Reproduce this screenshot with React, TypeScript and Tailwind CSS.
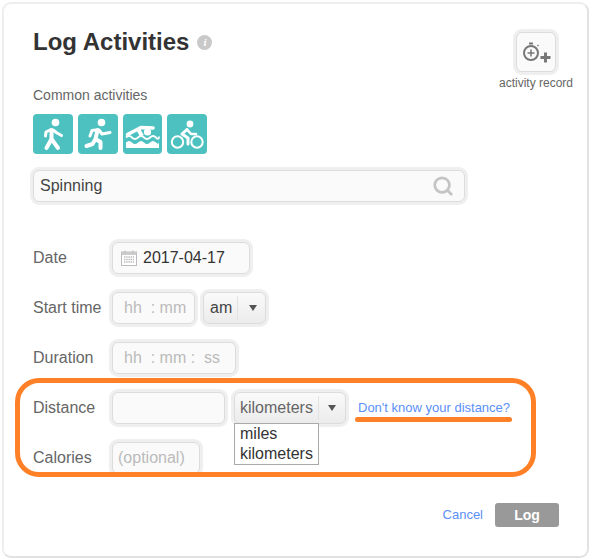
import { Search } from 'lucide-react';

// Log Activities form

const boxClass =
  'h-8 rounded-md border border-[#dcdcdc] bg-[#fafafa] ring-[3px] ring-[#efefef] flex items-center text-base';

function WalkIcon() {
  return (
    <svg viewBox="0 0 40 40" className="w-10 h-10" fill="none" stroke="#fff" strokeWidth="4" strokeLinecap="round" strokeLinejoin="round">
      <circle cx="22.5" cy="8.5" r="3.8" fill="#fff" stroke="none" />
      <path d="M18.5 16v9l-5 9M18.5 25l6.5 9" />
      <path d="M17 16l-4 2-.5 4M20 16l4 3 4.5 2.5" strokeWidth="3" />
    </svg>
  );
}

function RunIcon() {
  return (
    <svg viewBox="0 0 40 40" className="w-10 h-10" fill="none" stroke="#fff" strokeWidth="4" strokeLinecap="round" strokeLinejoin="round">
      <circle cx="23.5" cy="8.5" r="3.8" fill="#fff" stroke="none" />
      <path d="M19.5 16l-2 9-3 5-6 2M17.5 25l5 3v6" />
      <path d="M18 16l-4 .5-2 5.5M21 16l3 4 8-1.5" strokeWidth="3" />
    </svg>
  );
}

function SwimIcon() {
  return (
    <svg viewBox="0 0 39 40" className="w-[39px] h-10" fill="none">
      <circle cx="24.5" cy="18" r="3.6" fill="#fff" />
      <path d="M4.5 20.5L18 13.5l12 .5" stroke="#fff" strokeWidth="3.6" strokeLinecap="round" strokeLinejoin="round" />
      <path d="M15 15l4 7" stroke="#fff" strokeWidth="4" />
      <path d="M3 23.5q3-3 6 0t6 0 6 0 6 0 6 0 3-1" stroke="#fff" strokeWidth="1.8" />
      <path d="M3 28.5q3-3 6 0t6 0 6 0 6 0 6 0 3-1V34H3z" fill="#fff" />
    </svg>
  );
}

function BikeIcon() {
  return (
    <svg viewBox="0 0 40 40" className="w-10 h-10" fill="none" stroke="#fff" strokeLinecap="round" strokeLinejoin="round">
      <circle cx="23" cy="10" r="3.4" fill="#fff" stroke="none" />
      <circle cx="10.5" cy="28" r="5.7" strokeWidth="2" />
      <circle cx="30" cy="28" r="5.7" strokeWidth="2" />
      <path d="M20 15.5l-5 4.5 6 4v6" strokeWidth="3" />
      <path d="M20 15.5l4 4.5h5" strokeWidth="2.6" />
    </svg>
  );
}

function StopwatchPlus() {
  return (
    <svg viewBox="0 -2 30 24" className="w-[30px] h-6" fill="none" stroke="#777">
      <circle cx="10" cy="11" r="7" strokeWidth="2" />
      <path d="M10 7.5v7M6.5 11h7" strokeWidth="1.5" />
      <path d="M8 1.5h4" strokeWidth="2" />
      <path d="M16.5 3l1 1" strokeWidth="1.5" />
      <path d="M24.5 10.5v10M19.5 15.5h10" strokeWidth="3" />
    </svg>
  );
}

function CalendarIcon() {
  return (
    <svg viewBox="0 0 16 16" className="w-4 h-4 shrink-0" fill="none">
      <rect x="0.5" y="2" width="15" height="13.5" fill="#fff" stroke="#bbb" />
      <rect x="0.5" y="2" width="15" height="3" fill="#ccc" />
      <path d="M4 0.5v3M12 0.5v3" stroke="#bbb" />
      <path d="M3 7h10M3 9.5h10M3 12h10" stroke="#bbb" strokeWidth="1.4" strokeDasharray="1.4 0.8" />
    </svg>
  );
}

function Caret() {
  return <span className="w-0 h-0 border-x-[4px] border-x-transparent border-t-[6px] border-t-[#555]" />;
}

export default function App() {
  return (
    <div className="w-[594px] h-[560px] bg-white pl-[2px] pt-[2px] font-['Liberation_Sans',Arial,sans-serif]">
      <div className="relative w-[587px] h-[556px] rounded-[9px] border-2 border-[#eeeeee] border-b-[#e2e2e2] border-r-[#e2e2e2] pl-[29px] pr-[13px] pt-[24px]">
        {/* 头部 */}
        <div className="flex justify-between">
          <div className="w-[432px]">
            <h1 className="flex items-center text-2xl leading-[28px] font-bold text-[#333]">
              Log Activities
              <span className="ml-2 w-[15px] h-[15px] rounded-full bg-[#c9c9c9] text-white text-[11px] leading-[15px] italic font-['Liberation_Serif',serif] text-center">
                i
              </span>
            </h1>
            <div className="mt-[31px] text-sm leading-4 text-[#666]">Common activities</div>
            <div className="mt-[11px] flex gap-[5px]">
              <div className="w-10 h-10 rounded-[4px] bg-[#4dc1c0]"><WalkIcon /></div>
              <div className="w-10 h-10 rounded-[4px] bg-[#4dc1c0]"><RunIcon /></div>
              <div className="w-[39px] h-10 rounded-[4px] bg-[#4dc1c0]"><SwimIcon /></div>
              <div className="w-10 h-10 rounded-[4px] bg-[#4dc1c0]"><BikeIcon /></div>
            </div>
            <div className={`${boxClass} mt-4 pl-[6px] pr-[10px] justify-between text-[#444]`}>
              <span>Spinning</span>
              <Search className="w-[22px] h-[22px] text-[#c4c4c4]" strokeWidth={3} />
            </div>
          </div>
          <div className="flex flex-col items-center w-[76px] mt-[4px]">
            <div className="w-10 h-10 rounded-md border border-[#dcdcdc] bg-[#fafafa] ring-[3px] ring-[#efefef] flex items-center justify-center">
              <StopwatchPlus />
            </div>
            <span className="mt-[4px] text-xs leading-[14px] text-[#666] whitespace-nowrap">activity record</span>
          </div>
        </div>

        {/* 表单 */}
        <div className="mt-10 flex flex-col gap-[18px] text-[#666]">
          <div className="flex items-center">
            <span className="w-[79px] text-base">Date</span>
            <div className={`${boxClass} w-[138px] pl-2 gap-[6px] text-[#333]`}>
              <CalendarIcon />
              <span>2017-04-17</span>
            </div>
          </div>
          <div className="flex items-center">
            <span className="w-[79px] text-base">Start time</span>
            <div className={`${boxClass} w-[83px] pl-[11px] text-[#bbb] whitespace-nowrap`}>hh&nbsp;&nbsp;:&nbsp;mm</div>
            <div className={`${boxClass} ml-2 w-[63px] pl-[6px] bg-gradient-to-b from-[#fafafa] to-[#ebebeb] text-[#444]`}>
              <span>am</span>
              <span className="ml-[5px] h-6 border-l border-[#e2e2e2]" />
              <span className="ml-[11px] flex"><Caret /></span>
            </div>
          </div>
          <div className="flex items-center">
            <span className="w-[79px] text-base">Duration</span>
            <div className={`${boxClass} w-[124px] pl-[11px] text-[#bbb] whitespace-nowrap`}>hh&nbsp;&nbsp;:&nbsp;mm&nbsp;:&nbsp;&nbsp;ss</div>
          </div>
          <div className="flex items-center">
            <span className="w-[79px] text-base">Distance</span>
            <div className={`${boxClass} w-[113px]`} />
            <div className="relative ml-[9px]">
              <div className={`${boxClass} w-[112px] pl-1 bg-gradient-to-b from-[#fafafa] to-[#ebebeb] text-[#666]`}>
                <span className="pl-[1px]">kilometers</span>
                <span className="ml-[5px] h-6 border-l border-[#e2e2e2]" />
                <span className="ml-[9px] flex"><Caret /></span>
              </div>
              {/* 下拉菜单 */}
              <div className="absolute left-0 top-[31px] w-[85px] h-[42px] border border-[#aaa] bg-white pl-[5px] text-base leading-5 text-[#333]">
                <div>miles</div>
                <div>kilometers</div>
              </div>
            </div>
            <a className="ml-3 text-[13px] text-[#5b8ff9] whitespace-nowrap">Don't know your distance?</a>
          </div>
          <div className="flex items-center">
            <span className="w-[79px] text-base">Calories</span>
            <div className={`${boxClass} w-[88px] pl-[5px] text-[#bbb]`}>(optional)</div>
          </div>
        </div>

        <div className="mt-[29px] flex justify-end items-center pr-[15px]">
          <a className="text-[13px] text-[#5b8ff9]">Cancel</a>
          <button className="ml-3 w-16 h-6 rounded-[3px] bg-[#999] text-white text-sm font-bold">Log</button>
        </div>

        {/* 橙色标注 */}
        <div className="absolute left-[11px] top-[374px] w-[521px] h-[99px] rounded-[24px] border-[5px] border-[#ff8027]" />
        <div className="absolute left-[351px] top-[413px] w-[157px] h-[5px] rounded-full bg-[#ff8027]" />
      </div>
    </div>
  );
}
